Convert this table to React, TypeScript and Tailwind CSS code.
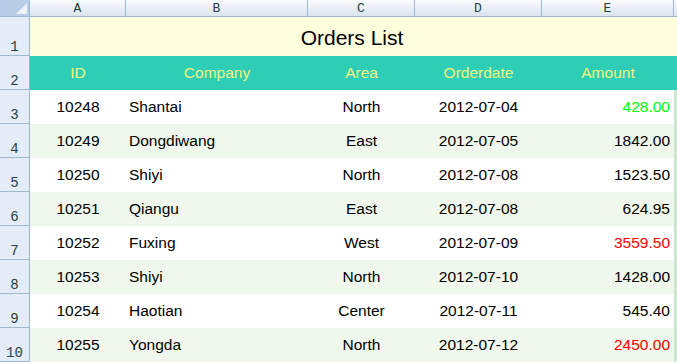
import React from 'react';

interface Order {
  id: number;
  company: string;
  area: string;
  date: string;
  amount: string;
  tone?: 'green' | 'red';
}

const orders: Order[] = [
  { id: 10248, company: 'Shantai', area: 'North', date: '2012-07-04', amount: '428.00', tone: 'green' },
  { id: 10249, company: 'Dongdiwang', area: 'East', date: '2012-07-05', amount: '1842.00' },
  { id: 10250, company: 'Shiyi', area: 'North', date: '2012-07-08', amount: '1523.50' },
  { id: 10251, company: 'Qiangu', area: 'East', date: '2012-07-08', amount: '624.95' },
  { id: 10252, company: 'Fuxing', area: 'West', date: '2012-07-09', amount: '3559.50', tone: 'red' },
  { id: 10253, company: 'Shiyi', area: 'North', date: '2012-07-10', amount: '1428.00' },
  { id: 10254, company: 'Haotian', area: 'Center', date: '2012-07-11', amount: '545.40' },
  { id: 10255, company: 'Yongda', area: 'North', date: '2012-07-12', amount: '2450.00', tone: 'red' },
];

const cols = ['A', 'B', 'C', 'D', 'E'];
const colWidths = ['w-[96px]', 'w-[182px]', 'w-[107px]', 'w-[127px]', 'w-[132px]'];

// Row number cell on the left edge of the sheet
const RowHead: React.FC<{ n: number; h: string }> = ({ n, h }) => (
  <div
    className={`${h} w-[30px] shrink-0 bg-[#e4ecf7] border-r border-b border-[#9eb6ce] flex items-end justify-center pb-[1px] font-['Liberation_Mono',monospace] text-[14px] leading-none text-[#27413e]`}
  >
    {n}
  </div>
);

export default function App() {
  return (
    <div className="w-[677px] h-[362px] overflow-hidden bg-white font-['Liberation_Sans',Arial,sans-serif]">
      {/* Column letters */}
      <div className="flex h-[17px]">
        <div className="w-[30px] shrink-0 bg-[#b9cde6] border-r border-b border-[#9eb6ce] relative">
          <svg className="absolute right-[2px] bottom-[2px]" width="11" height="11" viewBox="0 0 11 11">
            <polygon points="11,0 11,11 0,11" fill="#eef3fa" />
          </svg>
        </div>
        {cols.map((c, i) => (
          <div
            key={c}
            className={`${colWidths[i]} shrink-0 bg-gradient-to-b from-[#f9fbfd] to-[#dbe3ee] border-r border-b border-[#9eb6ce] flex items-center justify-center font-['Liberation_Mono',monospace] text-[13px] leading-none text-[#27413e]`}
          >
            {c}
          </div>
        ))}
        <div className="flex-1 bg-gradient-to-b from-[#f9fbfd] to-[#dbe3ee] border-b border-[#9eb6ce]" />
      </div>

      {/* Title row */}
      <div className="flex">
        <RowHead n={1} h="h-[39px]" />
        <div className="flex-1 h-[39px] bg-[#ffffdd] flex">
          <div className="w-[644px] flex items-center justify-center pt-[2px] text-[21px] text-black">
            Orders List
          </div>
        </div>
      </div>

      {/* Header row */}
      <div className="flex">
        <RowHead n={2} h="h-[34px]" />
        <div className="flex-1 h-[34px] bg-[#2ecdb5] flex items-center text-[15.5px] text-[#f2f57e]">
          <div className="w-[96px] text-center">ID</div>
          <div className="w-[182px] text-center">Company</div>
          <div className="w-[107px] text-center">Area</div>
          <div className="w-[127px] text-center">Orderdate</div>
          <div className="w-[132px] text-center">Amount</div>
        </div>
      </div>

      {/* Data rows */}
      {orders.map((o, i) => (
        <div key={o.id} className="flex">
          <RowHead n={i + 3} h="h-[34px]" />
          <div
            className={`flex-1 h-[34px] flex items-center text-[15.5px] text-black ${
              i % 2 === 0 ? 'bg-white' : 'bg-[#f0f7ec]'
            }`}
          >
            <div className="w-[96px] text-center">{o.id}</div>
            <div className="w-[182px] pl-[3px]">{o.company}</div>
            <div className="w-[107px] text-center">{o.area}</div>
            <div className="w-[127px] text-center">{o.date}</div>
            <div
              className={`w-[132px] text-right pr-[4px] ${
                o.tone === 'green' ? 'text-[#00ff00]' : o.tone === 'red' ? 'text-[#ff0000]' : ''
              }`}
            >
              {o.amount}
            </div>
            <div className="flex-1 self-stretch bg-[#c9e8cd]" />
          </div>
        </div>
      ))}
    </div>
  );
}
